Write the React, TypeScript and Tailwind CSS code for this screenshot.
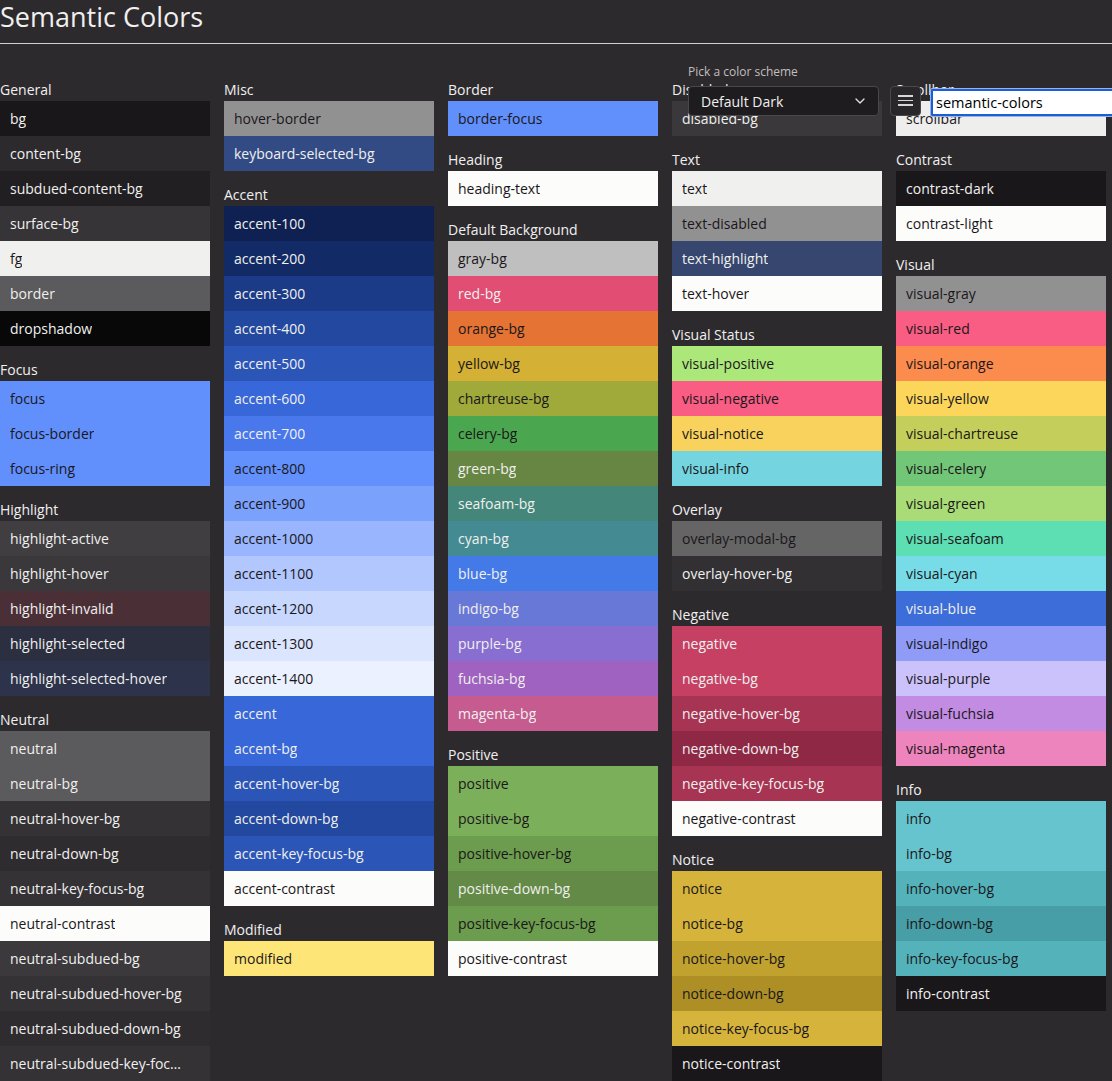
import { ChevronDown } from 'lucide-react'

type Swatch = [name: string, bg: string, dark?: boolean]
type Group = { label: string; items: Swatch[] }

const DARK_TEXT = 'text-[#1a171a]'
const LIGHT_TEXT = 'text-[#f0f0ee]'

// dark = true means the label is drawn in dark text
const columns: Group[][] = [
  [
    {
      label: 'General',
      items: [
        ['bg', '#1a171a'],
        ['content-bg', '#2d2a2e'],
        ['subdued-content-bg', '#211f22'],
        ['surface-bg', '#373438'],
        ['fg', '#f0f0ee', true],
        ['border', '#5b5a5c'],
        ['dropshadow', '#080808'],
      ],
    },
    {
      label: 'Focus',
      items: [
        ['focus', '#618ffc', true],
        ['focus-border', '#618ffc', true],
        ['focus-ring', '#618ffc', true],
      ],
    },
    {
      label: 'Highlight',
      items: [
        ['highlight-active', '#403e41'],
        ['highlight-hover', '#3a383b'],
        ['highlight-invalid', '#4b2f37'],
        ['highlight-selected', '#2b2f3f'],
        ['highlight-selected-hover', '#2d334a'],
      ],
    },
    {
      label: 'Neutral',
      items: [
        ['neutral', '#5b5a5c'],
        ['neutral-bg', '#5b5a5c'],
        ['neutral-hover-bg', '#343235'],
        ['neutral-down-bg', '#2f2c30'],
        ['neutral-key-focus-bg', '#343235'],
        ['neutral-contrast', '#fcfcfa', true],
        ['neutral-subdued-bg', '#3b393c'],
        ['neutral-subdued-hover-bg', '#343235'],
        ['neutral-subdued-down-bg', '#2f2c30'],
        ['neutral-subdued-key-focus-bg', '#343235'],
      ],
    },
  ],
  [
    {
      label: 'Misc',
      items: [
        ['hover-border', '#929192', true],
        ['keyboard-selected-bg', '#334b85'],
      ],
    },
    {
      label: 'Accent',
      items: [
        ['accent-100', '#0e2152'],
        ['accent-200', '#122b66'],
        ['accent-300', '#1b3b88'],
        ['accent-400', '#22489f'],
        ['accent-500', '#2b56b8'],
        ['accent-600', '#3767d8'],
        ['accent-700', '#4878ec'],
        ['accent-800', '#6290fc', true],
        ['accent-900', '#7aa1fc', true],
        ['accent-1000', '#98b5fd', true],
        ['accent-1100', '#b2c7fe', true],
        ['accent-1200', '#c7d7fe', true],
        ['accent-1300', '#dbe5fe', true],
        ['accent-1400', '#ecf1ff', true],
        ['accent', '#3767d8'],
        ['accent-bg', '#3767d8'],
        ['accent-hover-bg', '#2b56b8'],
        ['accent-down-bg', '#22489f'],
        ['accent-key-focus-bg', '#2b56b8'],
        ['accent-contrast', '#fcfcfa', true],
      ],
    },
    { label: 'Modified', items: [['modified', '#fee578', true]] },
  ],
  [
    { label: 'Border', items: [['border-focus', '#618ffc', true]] },
    { label: 'Heading', items: [['heading-text', '#fcfcfa', true]] },
    {
      label: 'Default Background',
      items: [
        ['gray-bg', '#c0bfbf', true],
        ['red-bg', '#e14d73'],
        ['orange-bg', '#e57333', true],
        ['yellow-bg', '#d4b035', true],
        ['chartreuse-bg', '#a0aa3a', true],
        ['celery-bg', '#4aa64f', true],
        ['green-bg', '#678643'],
        ['seafoam-bg', '#44877a'],
        ['cyan-bg', '#438a92'],
        ['blue-bg', '#4479e8'],
        ['indigo-bg', '#6878d6'],
        ['purple-bg', '#876ed0'],
        ['fuchsia-bg', '#a062c0'],
        ['magenta-bg', '#c65b8f'],
      ],
    },
    {
      label: 'Positive',
      items: [
        ['positive', '#7caf5a', true],
        ['positive-bg', '#7caf5a', true],
        ['positive-hover-bg', '#6c9c4d', true],
        ['positive-down-bg', '#638a46'],
        ['positive-key-focus-bg', '#6c9c4d', true],
        ['positive-contrast', '#fcfcfa', true],
      ],
    },
  ],
  [
    { label: 'Disabled', items: [['disabled-bg', '#3a383b']] },
    {
      label: 'Text',
      items: [
        ['text', '#f0f0ee', true],
        ['text-disabled', '#929192', true],
        ['text-highlight', '#36466f'],
        ['text-hover', '#fcfcfa', true],
      ],
    },
    {
      label: 'Visual Status',
      items: [
        ['visual-positive', '#ace77a', true],
        ['visual-negative', '#f95d84', true],
        ['visual-notice', '#f8d25c', true],
        ['visual-info', '#74d5e0', true],
      ],
    },
    {
      label: 'Overlay',
      items: [
        ['overlay-modal-bg', '#666566', true],
        ['overlay-hover-bg', '#333034'],
      ],
    },
    {
      label: 'Negative',
      items: [
        ['negative', '#c54063'],
        ['negative-bg', '#c54063'],
        ['negative-hover-bg', '#a83454'],
        ['negative-down-bg', '#8f2845'],
        ['negative-key-focus-bg', '#a83454'],
        ['negative-contrast', '#fcfcfa', true],
      ],
    },
    {
      label: 'Notice',
      items: [
        ['notice', '#d6b33a', true],
        ['notice-bg', '#d6b33a', true],
        ['notice-hover-bg', '#c1a22f', true],
        ['notice-down-bg', '#ad8f26', true],
        ['notice-key-focus-bg', '#d6b33a', true],
        ['notice-contrast', '#1a171a'],
      ],
    },
  ],
  [
    { label: 'Scrollbar', items: [['scrollbar', '#eeeeec', true]] },
    {
      label: 'Contrast',
      items: [
        ['contrast-dark', '#1a171a'],
        ['contrast-light', '#fcfcfa', true],
      ],
    },
    {
      label: 'Visual',
      items: [
        ['visual-gray', '#929192', true],
        ['visual-red', '#f95d84', true],
        ['visual-orange', '#fc8c4d', true],
        ['visual-yellow', '#fcd65b', true],
        ['visual-chartreuse', '#c4cf5b', true],
        ['visual-celery', '#72c677', true],
        ['visual-green', '#a9dc76', true],
        ['visual-seafoam', '#5ddeb3', true],
        ['visual-cyan', '#78dce8', true],
        ['visual-blue', '#3c6dd9'],
        ['visual-indigo', '#909bf8', true],
        ['visual-purple', '#cbc2fc', true],
        ['visual-fuchsia', '#c28ce2', true],
        ['visual-magenta', '#ed84bd', true],
      ],
    },
    {
      label: 'Info',
      items: [
        ['info', '#66c4cf', true],
        ['info-bg', '#66c4cf', true],
        ['info-hover-bg', '#54b2bb', true],
        ['info-down-bg', '#479ea6', true],
        ['info-key-focus-bg', '#54b2bb', true],
        ['info-contrast', '#1a171a'],
      ],
    },
  ],
]

function ColorGroup({ group }: { group: Group }) {
  return (
    <div>
      <p className="h-[21px] leading-[20px] text-[14px] text-[#f0f0ee]">{group.label}</p>
      {group.items.map(([name, bg, dark]) => (
        <div
          key={name}
          className={`h-[35px] flex items-center pl-[10px] pr-[28px] pb-[1px] text-[14px] ${dark ? DARK_TEXT : LIGHT_TEXT}`}
          style={{ backgroundColor: bg }}
        >
          <span className="truncate">{name}</span>
        </div>
      ))}
    </div>
  )
}

function SchemePicker() {
  return (
    <div className="absolute left-[688px] top-[64px] flex items-end gap-[11px]">
      <div>
        <p className="h-[16px] leading-[16px] text-[12px] text-[#c0bfbf] mb-[6px]">Pick a color scheme</p>
        <div className="w-[191px] h-[30px] flex items-center justify-between pl-[12px] pr-[10px] rounded-[4px] border border-[#4a484b] bg-[#1e1c1f] text-[14px] text-[#f0f0ee]">
          <span>Default Dark</span>
          <ChevronDown size={16} strokeWidth={2} className="text-[#e0e0de]" />
        </div>
      </div>
      <div className="flex items-center gap-[10px]">
        <button className="w-[31px] h-[30px] flex flex-col items-center justify-center gap-[3px] rounded-[4px] border border-[#4a484b] bg-[#2a272b]">
          <span className="block w-[15px] h-[1.5px] bg-[#d8d7d6]" />
          <span className="block w-[15px] h-[1.5px] bg-[#d8d7d6]" />
          <span className="block w-[15px] h-[1.5px] bg-[#d8d7d6]" />
        </button>
        <input
          readOnly
          value="semantic-colors"
          className="w-[190px] h-[27px] mt-[4px] px-[3px] bg-white text-black text-[14.5px] border-2 border-[#1a5fd6] outline-1 outline-[#9ab4e6] rounded-[1px]"
        />
      </div>
    </div>
  )
}

export default function App() {
  return (
    <div
      className="relative min-h-screen w-full overflow-hidden bg-[#2d2a2e]"
      style={{ fontFamily: '"Open Sans", "Noto Sans", sans-serif' }}
    >
      <h1 className="text-[27px] leading-[34px] text-[#f0f0ee] mb-[9px]">Semantic Colors</h1>
      <hr className="border-0 border-t border-[#d0cfce]" />
      <div className="flex gap-[14px] pt-[36px]">
        {columns.map((col, i) => (
          <div key={i} className="w-[210px] flex flex-col gap-[14px]">
            {col.map((g) => (
              <ColorGroup key={g.label} group={g} />
            ))}
          </div>
        ))}
      </div>
      <SchemePicker />
    </div>
  )
}
